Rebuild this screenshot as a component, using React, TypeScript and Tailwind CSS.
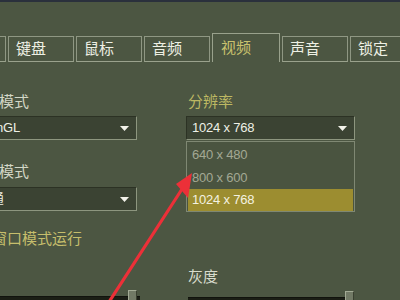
import React from 'react';

const font = "font-['Liberation_Sans','Noto_Sans_CJK_SC',sans-serif]";

function Tab({ label, active, wide }: { label: string; active?: boolean; wide?: boolean }) {
  if (active) {
    return (
      <div className="shrink-0 w-[68px] h-[29px] border border-b-0 border-[#99a18c] bg-[#4c5642] pl-[8px] pt-[4px] text-[15px] leading-[20px] text-[#c9c26e]">
        {label}
      </div>
    );
  }
  return (
    <div
      className={`shrink-0 ${wide ? 'w-[80px]' : 'w-[66px]'} h-[26px] border border-[#8f9783] border-b-[#9aa28d] pl-[7px] pt-[2px] text-[15px] leading-[20px] text-[#eef0e4]`}>
      {label}
    </div>
  );
}

function Select({ value, className = '' }: { value: string; className?: string }) {
  return (
    <div
      className={`h-[24px] flex items-center justify-between bg-[#3b4333] border border-[#8d967f] border-t-[#2c3224] border-l-[#2c3224] pr-[7px] ${className}`}>
      <span className="text-[13px] tracking-[-0.2px] text-[#eef0e6] whitespace-nowrap">{value}</span>
      <svg width="9" height="5" viewBox="0 0 9 5">
        <polygon points="0,0 9,0 4.5,5" fill="#f2f2ea" />
      </svg>
    </div>
  );
}

function Slider({ pos, width }: { pos: number; width: number }) {
  return (
    <div className="relative h-[12px]" style={{ width }}>
      <div className="absolute left-0 right-0 top-[6px] h-[4px] bg-[#1b1e15] border-t border-[#11130d]" />
      <div
        className="absolute top-0 w-[9px] h-[12px] bg-[#727a66] border border-[#a3ab95] border-r-[#3a4030] border-b-0"
        style={{ left: pos }} />
    </div>
  );
}

export default function App() {
  return (
    <div className={`relative w-[400px] h-[300px] overflow-hidden bg-[#4c5642] ${font}`}>
      <div className="h-[2px] bg-[#2a303c]" />

      {/* tab strip */}
      <div className="mt-[31px] ml-[-60px] flex items-end gap-[2px]">
        <Tab label="控制" />
        <Tab label="键盘" />
        <Tab label="鼠标" />
        <Tab label="音频" />
        <Tab label="视频" active />
        <Tab label="声音" />
        <Tab label="锁定" wide />
      </div>

      {/* content */}
      <div className="ml-[-34px] mt-[30px] flex gap-[49px]">
        <div className="w-[171px] shrink-0 flex flex-col">
          <div className="pl-[3px] text-[15px] leading-[20px] text-[#d3d7c7]">渲染模式</div>
          <Select value="OpenGL" className="mt-[4px] pl-[5px]" />
          <div className="mt-[22px] pl-[3px] text-[15px] leading-[20px] text-[#d3d7c7]">显示模式</div>
          <Select value="普通" className="mt-[5px] pl-[11px]" />
          <div className="mt-[18px] flex items-center gap-[6px] pl-[6px]">
            <div className="w-[14px] h-[14px] bg-[#3b4333] border border-[#8d967f]" />
            <span className="text-[15px] leading-[20px] text-[#c6be6c]">窗口模式运行</span>
          </div>
          <div className="mt-[41px] pl-[34px]">
            <Slider width={140} pos={128} />
          </div>
        </div>

        <div className="w-[169px] shrink-0 flex flex-col">
          <div className="pl-[2px] text-[15px] leading-[20px] text-[#bdb862]">分辨率</div>
          <div className="relative mt-[4px]">
            <Select value="1024 x 768" className="pl-[5px]" />
            <div className="absolute left-0 right-0 top-[25px] h-[71px] bg-[#4a5440] border border-[#7f8873] pt-[1px] px-[1px] z-10">
              <div className="h-[23px] flex items-center pl-[4px] text-[13px] tracking-[-0.2px] text-[#a3a894]">640 x 480</div>
              <div className="h-[23px] flex items-center pl-[4px] text-[13px] tracking-[-0.2px] text-[#a3a894]">800 x 600</div>
              <div className="h-[22px] flex items-center pl-[4px] bg-[#9c8d30] text-[13px] tracking-[-0.2px] text-[#f4f2e0]">1024 x 768</div>
            </div>
          </div>
          <div className="mt-[127px] pl-[2px] text-[15px] leading-[20px] text-[#d8dccd]">灰度</div>
          <div className="mt-[4px] pl-[2px]">
            <Slider width={166} pos={157} />
          </div>
        </div>
      </div>

      {/* red annotation arrow */}
      <svg className="absolute left-0 top-0 z-20" width="400" height="300" viewBox="0 0 400 300">
        <line x1="109" y1="302" x2="184" y2="186" stroke="#ec3038" strokeWidth="3.2" strokeLinecap="round" />
        <polygon points="192,173 176,184 188,198" fill="#ec3038" />
      </svg>
    </div>
  );
}
